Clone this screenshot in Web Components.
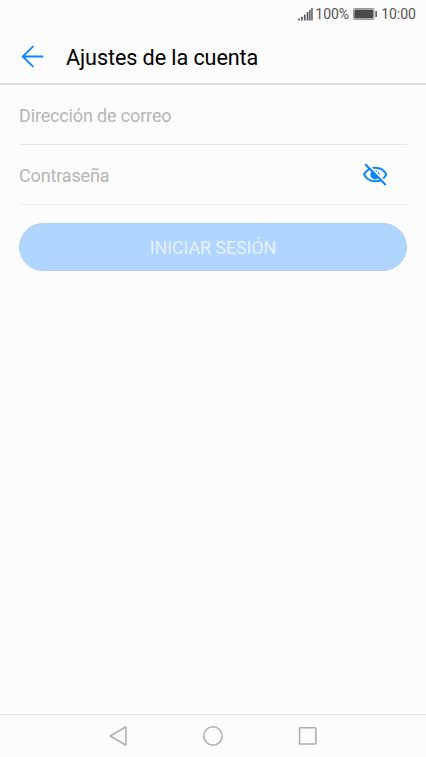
<!DOCTYPE html>
<html lang="es">
<head>
<meta charset="utf-8">
<title>Ajustes de la cuenta</title>
<style>
html,body{margin:0;height:100%;background:#fcfcfc;font-family:Roboto,"Noto Sans",sans-serif;overflow:hidden}
</style>
</head>
<body>
<account-screen></account-screen>
<script>
const define = (name, html) => {
  const t = document.createElement('template');
  t.innerHTML = html;
  customElements.define(name, class extends HTMLElement {
    constructor() {
      super();
      this.attachShadow({mode: 'open'}).appendChild(t.content.cloneNode(true));
    }
  });
};

define('status-bar', `
<style>
:host{display:flex;height:30px;box-sizing:border-box;padding:0 10px 2px 0;justify-content:flex-end;align-items:center;color:#555;font-size:14px;line-height:18px;white-space:nowrap}
svg{display:block;flex:none}
.signal{margin-right:2px}
.battery{margin:0 4px 0 4px}
</style>
<svg class="signal" width="15" height="14" viewBox="0 0 15 14" fill="#5a5a5a"><path d="M.3 11.500h1.700v2H.3zM3.100 9.800h1.700v3.700H3.100zM5.900 7.500h1.700v6H5.900zM8.700 5h1.700v8.500H8.700zM11.100 3h1.500v10.500h-1.500zM13.200 1h1.500v12.500h-1.500z"/></svg>
<span><slot name="level"></slot></span>
<svg class="battery" width="24" height="12" viewBox="0 0 24 12"><rect x=".5" y=".5" width="20.500" height="11" rx="1" fill="none" stroke="#999"/><rect x="1.300" y="1.500" width="19" height="9" fill="#4a4a4a"/><path d="M22.300 3h1.700v6h-1.700z" fill="#666"/></svg>
<span><slot name="time"></slot></span>`);

define('title-bar', `
<style>
:host{display:flex;height:55px;box-sizing:border-box;padding-left:21px;align-items:center;border-bottom:2px solid #dedede;color:#000}
svg{display:block;flex:none;margin-right:22px}
h1{margin:2px 0 0;font-size:21.6px;line-height:28px;font-weight:400;letter-spacing:-.09px;white-space:nowrap}
</style>
<svg width="23" height="23" viewBox="0 0 23 23" fill="none" stroke="#0a84ff" stroke-width="1.800"><path d="M22.300 11.500H1.700M12.400 1.200L1.700 11.500l10.700 10.300"/></svg>
<h1><slot></slot></h1>`);

define('text-field', `
<style>
:host{display:flex;height:60px;box-sizing:border-box;margin:0 19px;padding-right:19px;align-items:center;justify-content:space-between;border-bottom:1px solid var(--line,#e4e4e4);color:#b5b5b5;font-size:18px;letter-spacing:-.15px;line-height:24px;white-space:nowrap}
span{padding-top:2px}
</style>
<span><slot></slot></span><slot name="icon"></slot>`);

define('hidden-eye', `
<style>:host{display:block}svg{display:block}</style>
<svg width="26" height="24" viewBox="0 0 26 24" fill="none">
<path d="M2 11.500C4.500 7 8.500 4.700 13.500 4.700S22 7 24.300 11.500C22 16 18 18.300 13.300 18.300S4.500 16 2 11.500z" stroke="#0a84ff" stroke-width="1.900"/>
<circle cx="13" cy="11.800" r="4.600" fill="#0a84ff"/>
<path d="M13.800 11l2.600-3.200" stroke="#fcfcfc" stroke-width="1.300"/>
<path d="M4.800.3L25.500 21.200" stroke="#fcfcfc" stroke-width="1.800"/>
<path d="M3.200 1.200L23.800 22" stroke="#0a84ff" stroke-width="2"/>
</svg>`);

define('pill-button', `
<style>
:host{display:block;margin:18px 19px 0}
button{display:block;width:100%;height:48px;padding:1px 0 0;border:1px solid #aed1f6;border-radius:24px;background:#b0d5fe;color:#e6f2ff;font:400 18px/24px Roboto,sans-serif;letter-spacing:-.14px}
</style>
<button disabled><slot></slot></button>`);

define('navigation-bar', `
<style>
:host{display:flex;height:43px;box-sizing:border-box;margin-top:auto;padding:0 108px;align-items:center;justify-content:space-between;border-top:1px solid #e6e6e6}
svg{display:block}
</style>
<svg width="20" height="22" viewBox="0 0 20 22"><path d="M17.900 1.800v18.400L2.200 11z" fill="none" stroke="#b0b0b0" stroke-width="1.600" stroke-linejoin="round"/></svg>
<svg width="22" height="22" viewBox="0 0 22 22"><circle cx="11" cy="11" r="9.200" fill="none" stroke="#b0b0b0" stroke-width="1.600"/></svg>
<svg width="20" height="22" viewBox="0 0 20 22"><rect x="1.600" y="2.700" width="16.300" height="16.300" rx=".5" fill="none" stroke="#b0b0b0" stroke-width="1.600"/></svg>`);

define('account-screen', `
<style>:host{display:flex;flex-direction:column;height:100vh;background:#fcfcfc}.last{--line:#eee}</style>
<status-bar><span slot="level">100%</span><span slot="time">10:00</span></status-bar>
<title-bar>Ajustes de la cuenta</title-bar>
<text-field>Dirección de correo</text-field>
<text-field class="last">Contraseña<hidden-eye slot="icon"></hidden-eye></text-field>
<pill-button>INICIAR SESIÓN</pill-button>
<navigation-bar></navigation-bar>`);
</script>
</body>
</html>
